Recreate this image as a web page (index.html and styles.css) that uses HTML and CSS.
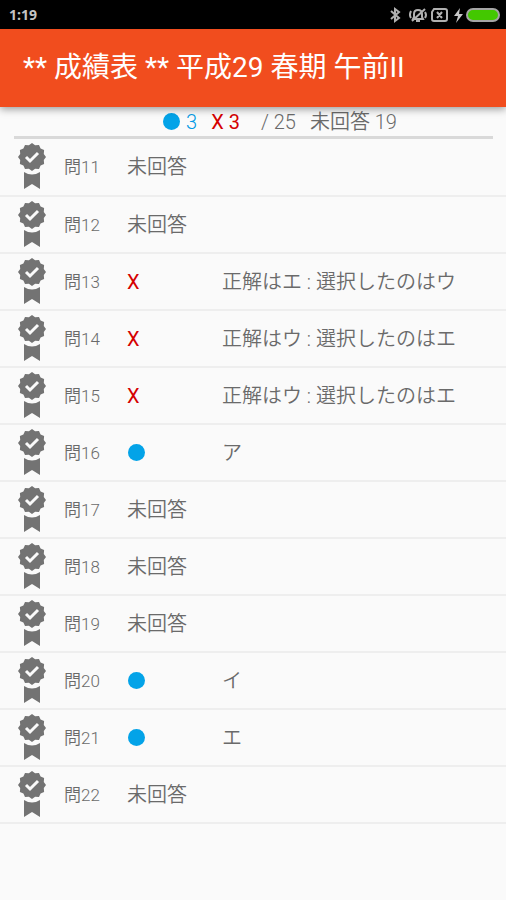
FILE: index.html
```
<!DOCTYPE html>
<html lang="ja">
<head>
<meta charset="utf-8">
<meta name="viewport" content="width=device-width, initial-scale=1">
<title>成績表</title>
<link rel="stylesheet" href="styles.css">
</head>
<body>
<svg class="defs" aria-hidden="true">
  <symbol id="badge" viewBox="0 0 28 46">
    <path d="M14 0l3.1 2.2 3.9-.3 1.6 3.5 3.5 1.6-.3 3.9L28 14l-2.2 3.1.3 3.9-3.5 1.6-1.6 3.5-3.9-.3L14 28l-3.1-2.2-3.9.3-1.6-3.5-3.5-1.6.3-3.9L0 14l2.2-3.1-.3-3.9 3.5-1.6 1.6-3.5 3.9.3z"/>
    <path d="M6 29q8 5 16 0v17l-8-5-8 5z"/>
    <path class="tick" d="M8 14l4 4 8-8"/>
  </symbol>
</svg>
<div class="status">
  <span>1:19</span>
  <svg class="status-icons" viewBox="0 0 112 18" aria-hidden="true">
    <path class="line" d="M1 5l8 7-4 3V3l4 3-8 7"/>
    <path class="line" d="M23 13h10l-1-2V8q0-4-4-4t-4 4v3zM26 15h4M22 15L35 3M21 5q-2 4 0 7M35 6q2 3 0 6"/>
    <path class="line" d="M44 3h11q2 0 2 2v8q0 2-2 2H44q-2 0-2-2V6zM47 6l5 6M52 6l-5 6"/>
    <path class="bolt" d="M70 2l-6 8h4l-2 7 7-9h-4z"/>
    <rect class="battery" x="77" y="3" width="32" height="12" rx="6"/>
  </svg>
</div>
<header class="bar"><h1>** 成績表 ** 平成29 春期 午前II</h1></header>
<main>
  <div class="summary">
    <span class="right"><i class="dot"></i>3</span>
    <span class="wrong">X 3</span>
    <span class="total">/ 25</span>
    <span>未回答 19</span>
  </div>
  <table class="results">
    <colgroup><col class="c-icon"><col class="c-no"><col class="c-mark"><col></colgroup>
    <tbody>
      <tr><td class="icon"><svg><use href="#badge"/></svg></td><th scope="row">問11</th><td colspan="2">未回答</td></tr>
      <tr><td class="icon"><svg><use href="#badge"/></svg></td><th scope="row">問12</th><td colspan="2">未回答</td></tr>
      <tr><td class="icon"><svg><use href="#badge"/></svg></td><th scope="row">問13</th><td class="wrong">X</td><td>正解はエ : 選択したのはウ</td></tr>
      <tr><td class="icon"><svg><use href="#badge"/></svg></td><th scope="row">問14</th><td class="wrong">X</td><td>正解はウ : 選択したのはエ</td></tr>
      <tr><td class="icon"><svg><use href="#badge"/></svg></td><th scope="row">問15</th><td class="wrong">X</td><td>正解はウ : 選択したのはエ</td></tr>
      <tr><td class="icon"><svg><use href="#badge"/></svg></td><th scope="row">問16</th><td><i class="dot"></i></td><td>ア</td></tr>
      <tr><td class="icon"><svg><use href="#badge"/></svg></td><th scope="row">問17</th><td colspan="2">未回答</td></tr>
      <tr><td class="icon"><svg><use href="#badge"/></svg></td><th scope="row">問18</th><td colspan="2">未回答</td></tr>
      <tr><td class="icon"><svg><use href="#badge"/></svg></td><th scope="row">問19</th><td colspan="2">未回答</td></tr>
      <tr><td class="icon"><svg><use href="#badge"/></svg></td><th scope="row">問20</th><td><i class="dot"></i></td><td>イ</td></tr>
      <tr><td class="icon"><svg><use href="#badge"/></svg></td><th scope="row">問21</th><td><i class="dot"></i></td><td>エ</td></tr>
      <tr><td class="icon"><svg><use href="#badge"/></svg></td><th scope="row">問22</th><td colspan="2">未回答</td></tr>
    </tbody>
  </table>
</main>
</body>
</html>
```
FILE: styles.css
```
* { box-sizing: border-box; }
body {
  margin: 0;
  background: #fafafa;
  color: #6a6a6a;
  font: 350 20px/28px Roboto, "Noto Sans CJK JP", sans-serif;
}
.defs { position: absolute; width: 0; height: 0; }
.status {
  display: flex;
  align-items: center;
  justify-content: space-between;
  height: 29px;
  padding: 0 4px 0 9px;
  background: #000;
  color: #c4c4c4;
  font: 700 14px/16px "Open Sans", sans-serif;
}
.status-icons { width: 112px; height: 18px; }
.line { fill: none; stroke: #b0b0b0; stroke-width: 2; }
.bolt { fill: #c8c8c8; }
.battery { fill: #43c800; stroke: #a5a5a5; stroke-width: 2; }
.bar {
  position: relative;
  display: flex;
  align-items: center;
  height: 78px;
  padding: 0 23px;
  background: #f14d1e;
  box-shadow: 0 2px 8px rgba(0, 0, 0, .4);
}
h1 {
  margin: 0;
  color: #fff;
  font-size: 28px;
  font-weight: 400;
  line-height: 40px;
  white-space: nowrap;
}
.summary {
  display: flex;
  align-items: center;
  justify-content: center;
  gap: 14px;
  height: 32px;
  margin: 0 13px 0 14px;
  padding-left: 53px;
  border-bottom: 3px solid #d9d9d9;
  white-space: nowrap;
}
.total { padding-left: 7px; }
.right { display: flex; align-items: center; gap: 6px; color: #039be5; }
.wrong { color: #d50000; font-weight: 400; }
.dot {
  display: block;
  width: 17px;
  height: 17px;
  border-radius: 50%;
  background: #03a3e8;
}
.results { width: 100%; table-layout: fixed; border-collapse: collapse; }
.c-icon { width: 64px; }
.c-no { width: 63px; }
.c-mark { width: 95px; }
tr { height: 57px; border-bottom: 2px solid #eee; }
td, th { padding: 0; text-align: left; vertical-align: middle; }
td .dot { margin-left: 1px; }
th { font-size: 17px; font-weight: 350; }
.icon { padding: 0 0 2px 18px; }
.icon svg { display: block; width: 28px; height: 46px; fill: #737373; }
.tick { fill: none; stroke: #fafafa; stroke-width: 3; }
```
